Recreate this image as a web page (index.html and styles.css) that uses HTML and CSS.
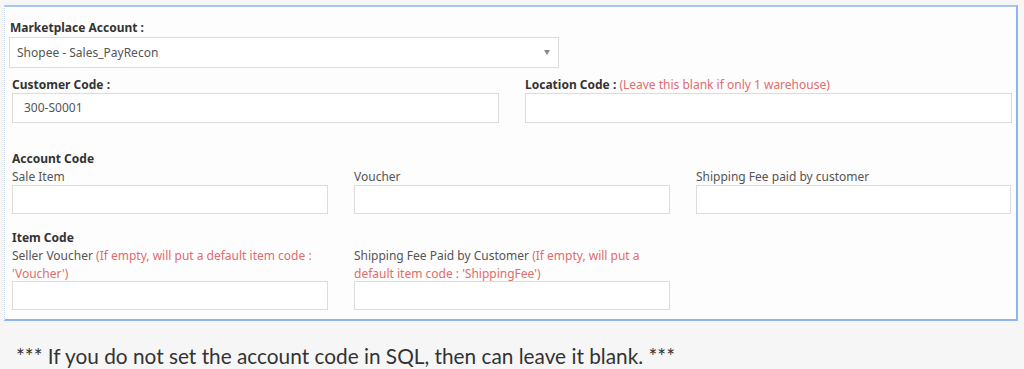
FILE: index.html
```html
<!DOCTYPE html>
<html lang="en">
<head>
    <meta charset="UTF-8">
    <meta name="viewport" content="width=device-width, initial-scale=1.0">
    <title>Marketplace Settings</title>
    <link rel="stylesheet" href="styles.css">
</head>
<body>

    <div class="form-box">
        <div class="field select-field">
            <label class="bold">Marketplace Account :</label>
            <div class="select">
                <span>Shopee - Sales_PayRecon</span>
                <span class="arrow"></span>
            </div>
        </div>

        <div class="row two">
            <div class="field">
                <label class="bold">Customer Code :</label>
                <div class="input">300-S0001</div>
            </div>
            <div class="field">
                <label class="bold">Location Code : <span class="note">(Leave this blank if only 1 warehouse)</span></label>
                <div class="input"></div>
            </div>
        </div>

        <div class="group">
            <div class="group-title">Account Code</div>
            <div class="row three">
                <div class="field">
                    <label>Sale Item</label>
                    <div class="input"></div>
                </div>
                <div class="field">
                    <label>Voucher</label>
                    <div class="input"></div>
                </div>
                <div class="field">
                    <label>Shipping Fee paid by customer</label>
                    <div class="input"></div>
                </div>
            </div>
        </div>

        <div class="group item-group">
            <div class="group-title">Item Code</div>
            <div class="row three">
                <div class="field">
                    <label>Seller Voucher <span class="note">(If empty, will put a default item code : 'Voucher')</span></label>
                    <div class="input"></div>
                </div>
                <div class="field">
                    <label>Shipping Fee Paid by Customer <span class="note">(If empty, will put a default item code : 'ShippingFee')</span></label>
                    <div class="input"></div>
                </div>
            </div>
        </div>
    </div>

    <p class="footnote">*** If you do not set the account code in SQL, then can leave it blank. ***</p>

</body>
</html>
```

FILE: styles.css
```css
body {
    margin: 0;
    background-color: #f6f6f6;
    font-family: "Noto Sans", sans-serif;
    color: #555;
}

.form-box {
    margin: 5px 4px 0 4px;
    width: 1014px;
    box-sizing: border-box;
    height: 316px;
    background-color: #fdfdfd;
    border-top: 2px solid #a8c4f2;
    border-right: 2px solid #8fb2f0;
    border-bottom: 2px solid #8fb2f0;
    border-left: 1px dotted #c6d6f0;
    padding: 13px 8px 0 4px;
    font-size: 12px;
}

label {
    display: block;
    line-height: 16px;
    color: #555;
}

.bold,
.group-title {
    font-weight: bold;
    color: #333;
}

.group-title {
    line-height: 18px;
}

.note {
    font-weight: normal;
    color: #e06c6c;
}

.select-field label {
    margin-left: 1px;
    margin-bottom: 1px;
}

.select {
    width: 550px;
    height: 31px;
    box-sizing: border-box;
    border: 1px solid #dcdcdc;
    background-color: #fff;
    display: flex;
    align-items: center;
    justify-content: space-between;
    padding: 0 8px 0 7px;
    color: #555;
}

.arrow {
    width: 0;
    height: 0;
    border-left: 3px solid transparent;
    border-right: 3px solid transparent;
    border-top: 5px solid #888;
}

.row {
    display: grid;
    padding-left: 3px;
}

.row.two {
    grid-template-columns: 487px 487px;
    column-gap: 26px;
    margin-top: 9px;
}

.row.three {
    grid-template-columns: 316px 316px 315px;
    column-gap: 26px;
}

.input {
    height: 30px;
    box-sizing: border-box;
    border: 1px solid #dcdcdc;
    background-color: #fff;
    padding: 0 11px;
    line-height: 28px;
    color: #555;
}

.group {
    margin-top: 27px;
    padding-left: 3px;
}

.group .row {
    padding-left: 0;
}

.group .input {
    height: 29px;
}

.group label {
    margin-top: 1px;
}

.item-group {
    margin-top: 15px;
}

.item-group label {
    margin-top: 0;
    line-height: 18px;
    margin-bottom: -2px;
}

.item-group .field {
    display: flex;
    flex-direction: column;
    justify-content: flex-end;
}

.footnote {
    margin: 22px 0 0 16px;
    font-family: Lato, sans-serif;
    font-size: 20.8px;
    color: #333;
}
```
